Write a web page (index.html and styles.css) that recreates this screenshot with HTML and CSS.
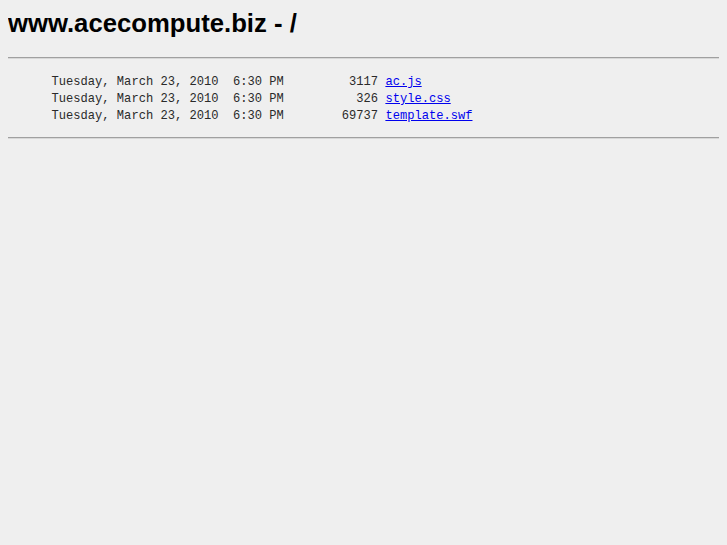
FILE: index.html
```html
<!DOCTYPE html>
<html>
<head>
<meta charset="utf-8">
<title>www.acecompute.biz - /</title>
<link rel="stylesheet" href="styles.css">
</head>
<body class="page">
<h1 class="title">www.acecompute.biz - /</h1>
<hr class="rule">
<pre class="listing">      Tuesday, March 23, 2010  6:30 PM         3117 <a class="file" href="#">ac.js</a>
      Tuesday, March 23, 2010  6:30 PM          326 <a class="file" href="#">style.css</a>
      Tuesday, March 23, 2010  6:30 PM        69737 <a class="file" href="#">template.swf</a></pre>
<hr class="rule">
</body>
</html>
```
FILE: styles.css
```css
html {
  background: #efefef;
}
.page {
  margin: 0 8px 8px 8px;
  padding: 0;
  background: #efefef;
  color: #000;
}
.title {
  font-family: "Liberation Sans", Arial, sans-serif;
  font-weight: bold;
  font-size: 25.7px;
  line-height: 29px;
  margin: 9px 0 19px 0;
}
.rule {
  margin: 0;
  border: 0;
  border-top: 1px solid #a0a0a0;
  border-bottom: 1px solid #d8d8d8;
  height: 0;
}
.listing {
  font-family: "Liberation Mono", "Courier New", monospace;
  font-size: 12.1px;
  line-height: 17px;
  color: #2a2a2a;
  margin: 15px 0 12px 0;
}
.file {
  color: #0000ee;
  text-decoration: underline;
}
```
